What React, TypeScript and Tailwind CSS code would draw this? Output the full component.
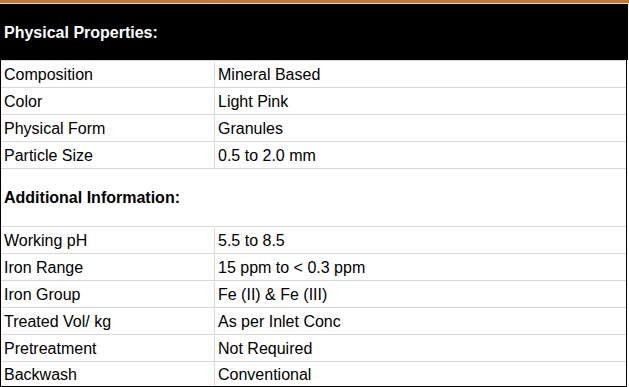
const physical: [string, string][] = [
  ['Composition', 'Mineral Based'],
  ['Color', 'Light Pink'],
  ['Physical Form', 'Granules'],
  ['Particle Size', '0.5 to 2.0 mm'],
];

const additional: [string, string][] = [
  ['Working pH', '5.5 to 8.5'],
  ['Iron Range', '15 ppm to < 0.3 ppm'],
  ['Iron Group', 'Fe (II) & Fe (III)'],
  ['Treated Vol/ kg', 'As per Inlet Conc'],
  ['Pretreatment', 'Not Required'],
  ['Backwash', 'Conventional'],
];

function Row({ label, value, last }: { label: string; value: string; last?: boolean }) {
  return (
    <div
      className={`flex border-t border-[#d9d9d9] pt-px ${last ? 'h-[25px]' : 'h-[27px]'}`}
    >
      <div className="flex w-[214px] items-center border-r border-[#d9d9d9] pl-[3px]">{label}</div>
      <div className="flex flex-1 items-center pl-[3px]">{value}</div>
    </div>
  );
}

export default function App() {
  return (
    <div
      className="h-[387px] w-[629px] overflow-hidden bg-white text-[16px] leading-none text-black"
      style={{ fontFamily: '"Liberation Sans", Arial, sans-serif' }}
    >
      <div className="flex h-[3px] bg-[#c9772b]">
        <div className="w-[215px] border-r border-[#9a7a5a]" />
      </div>
      <div className="h-px bg-[#d9d9d9]" />
      <div className="flex h-[56px] w-[628px] items-center bg-black pl-[4px] pt-px font-bold text-white">
        Physical Properties:
      </div>
      <div className="w-[627px] border-x border-b border-black">
        {physical.map(([k, v]) => (
          <Row key={k} label={k} value={v} />
        ))}
        <div className="flex h-[58px] items-center border-t border-[#d9d9d9] pl-[3px] pt-px font-bold">
          Additional Information:
        </div>
        {additional.map(([k, v], i) => (
          <Row key={k} label={k} value={v} last={i === additional.length - 1} />
        ))}
      </div>
    </div>
  );
}
